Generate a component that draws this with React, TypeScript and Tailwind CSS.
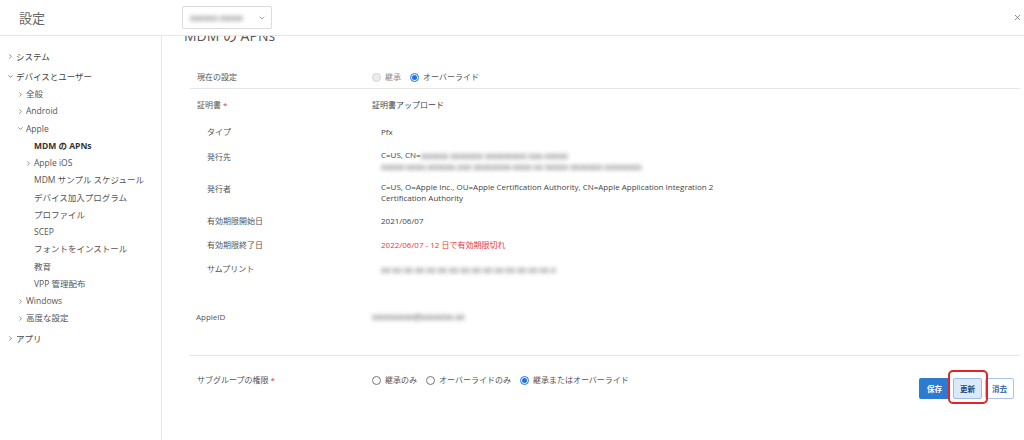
import { ChevronDown, ChevronRight, X } from "lucide-react";
import clsx from "clsx";

type NavItem = { label: string; level: 0 | 1 | 2; arrow?: "right" | "down"; bold?: boolean; gap?: boolean };

const nav: NavItem[] = [
  { label: "システム", level: 0, arrow: "right" },
  { label: "デバイスとユーザー", level: 0, arrow: "down", gap: true },
  { label: "全般", level: 1, arrow: "right" },
  { label: "Android", level: 1, arrow: "right" },
  { label: "Apple", level: 1, arrow: "down" },
  { label: "MDM の APNs", level: 2, bold: true },
  { label: "Apple iOS", level: 2, arrow: "right" },
  { label: "MDM サンプル スケジュール", level: 2 },
  { label: "デバイス加入プログラム", level: 2 },
  { label: "プロファイル", level: 2 },
  { label: "SCEP", level: 2 },
  { label: "フォントをインストール", level: 2 },
  { label: "教育", level: 2 },
  { label: "VPP 管理配布", level: 2 },
  { label: "Windows", level: 1, arrow: "right" },
  { label: "高度な設定", level: 1, arrow: "right" },
  { label: "アプリ", level: 0, arrow: "right", gap: true },
];

const Radio = ({ checked, disabled }: { checked?: boolean; disabled?: boolean }) => (
  <span
    className={clsx(
      "flex h-[9px] w-[9px] shrink-0 items-center justify-center rounded-full border",
      checked && "border-[#1a73e8] bg-white",
      disabled && "border-[#d4d4d4] bg-[#ececec]",
      !checked && !disabled && "border-[#777] bg-white"
    )}
  >
    {checked && <span className="h-[5px] w-[5px] rounded-full bg-[#1a73e8]" />}
  </span>
);

const Option = ({ label, checked, disabled }: { label: string; checked?: boolean; disabled?: boolean }) => (
  <span className="flex items-center gap-[4px]">
    <Radio checked={checked} disabled={disabled} />
    <span className={clsx(disabled ? "text-[#888]" : "text-[#555]")}>{label}</span>
  </span>
);

// masked values in the screenshot
const Blur = ({ w, text }: { w: string; text?: string }) => (
  <span className={clsx("inline-block overflow-hidden whitespace-nowrap align-middle font-bold text-[#888] blur-[2.2px]", w)}>
    {text ?? "xxxxx-xxxx.xxxxxx.xxx xxxxxxxx-xxxx xx xxxxx xxxxxxx xxxxxxxx"}
  </span>
);

const Row = ({ label, h, sub, children, lp = "" }: { label: React.ReactNode; h: string; sub?: boolean; children?: React.ReactNode; lp?: string }) => (
  <div className={clsx("flex items-start", h)}>
    <div className={clsx("w-[182px] shrink-0 text-[#555]", sub ? "pl-[17px]" : "pl-[7px]", lp)}>{label}</div>
    <div className={clsx("text-[#444]", sub && "pl-[9px]")}>{children}</div>
  </div>
);

export default function App() {
  return (
    <div className="flex h-[440px] w-[1024px] flex-col overflow-hidden bg-white font-['Open_Sans','Noto_Sans_CJK_JP',sans-serif] text-[8px] leading-[12px]">
      <header className="flex h-[36px] shrink-0 items-center border-b border-[#e6e6e6]">
        <div className="w-[182px] pl-[19px] text-[13px] text-[#666]">設定</div>
        <div className="flex h-[23px] w-[90px] items-center justify-between rounded-[2px] border border-[#dcdcdc] pl-[7px] pr-[5px]">
          <Blur w="w-[62px]" text="xxxxxx xxxxx" />
          <ChevronDown size={8} className="text-[#777]" />
        </div>
        <div className="flex-1" />
        <X size={9} strokeWidth={2} className="mr-[2px] text-[#666]" />
      </header>

      <div className="flex min-h-0 flex-1">
        <aside className="w-[162px] shrink-0 border-r border-[#e6e6e6] pt-[12px] text-[8.5px] text-[#555]">
          {nav.map((n) => (
            <div
              key={n.label}
              className={clsx(
                "flex h-[17.25px] items-center",
                n.gap && "mt-[3px]",
                n.level === 0 && "pl-[7px] text-[#444]",
                n.level === 1 && "pl-[17px]",
                n.level === 2 && "pl-[25px]"
              )}
            >
              <span className="flex w-[9px] shrink-0 items-center">
                {n.arrow === "right" && <ChevronRight size={7} strokeWidth={2.2} />}
                {n.arrow === "down" && <ChevronDown size={7} strokeWidth={2.2} />}
              </span>
              <span className={clsx(n.bold && "font-bold text-[#333]")}>{n.label}</span>
            </div>
          ))}
        </aside>

        <main className="min-w-0 flex-1 overflow-hidden">
          <div className="-mt-[10px] h-[21px] pl-[22px] text-[14px] leading-[20px] text-[#555]">MDM の APNs</div>
          <div className="ml-[28px] mr-[4px]">
            <div className="flex h-[42px] items-start border-b border-[#e6e6e6] pt-[24px]">
              <div className="w-[182px] shrink-0 pl-[7px] text-[#555]">現在の設定</div>
              <div className="flex h-[12px] items-center gap-[9px]">
                <Option label="継承" disabled />
                <Option label="オーバーライド" checked />
              </div>
            </div>

            <div className="pt-[10px]">
              <Row h="h-[27px]" label={<>証明書 <span className="text-[#e53935]">*</span></>}>
                証明書アップロード
              </Row>
              <Row h="h-[24px]" sub label="タイプ">Pfx</Row>
              <Row h="h-[31px]" sub label="発行先" lp="pt-[1px]">
                <div className="leading-[9.5px]">
                  <div className="whitespace-nowrap">
                    C=US, CN=<Blur w="w-[170px]" text="xxxxxx xxxxxxx xxxxxxxxx xxx.xxxxx" />
                  </div>
                  <Blur w="w-[340px]" />
                </div>
              </Row>
              <Row h="h-[34px]" sub label="発行者" lp="pt-[2px]">
                <div className="w-[345px] leading-[11px]">
                  C=US, O=Apple Inc., OU=Apple Certification Authority, CN=Apple Application Integration 2 Certification Authority
                </div>
              </Row>
              <Row h="h-[24px]" sub label="有効期限開始日">2021/06/07</Row>
              <Row h="h-[24px]" sub label="有効期限終了日">
                <span className="text-[#e53935]">2022/06/07 - 12 日で有効期限切れ</span>
              </Row>
              <Row h="h-[48px]" sub label="サムプリント">
                <Blur w="w-[175px]" text="xx xx xx xx xx xx xx xx xx xx xx xx xx xx xx xx xx xx" />
              </Row>
              <div className="flex h-[45px] items-start border-b border-[#e6e6e6]">
                <div className="w-[182px] shrink-0 pl-[6px] text-[#555]">AppleID</div>
                <Blur w="w-[98px]" text="xxxxxxxxx@xxxxxxx.xx" />
              </div>
            </div>

            <div className="flex items-start justify-between">
              <div className="flex items-start pt-[18px]">
                <div className="w-[182px] shrink-0 pl-[7px] text-[#555]">
                  サブグループの権限 <span className="text-[#e53935]">*</span>
                </div>
                <div className="flex h-[12px] items-center gap-[9px]">
                  <Option label="継承のみ" />
                  <Option label="オーバーライドのみ" />
                  <Option label="継承またはオーバーライド" checked />
                </div>
              </div>
              <div className="flex gap-[3px] pr-[6px] pt-[22px] text-[7.5px] font-bold">
                <button className="flex h-[21px] w-[31px] items-center justify-center rounded-[2px] bg-[#2b7bd0] text-white">
                  保存
                </button>
                <div className="relative">
                  <button className="flex h-[21px] w-[29px] items-center justify-center rounded-[2px] border border-[#9dbde3] bg-[#dceaf7] text-[#2a4d7a]">
                    更新
                  </button>
                  <span className="absolute -left-[5px] -top-[8px] h-[34px] w-[40px] rounded-[5px] border-2 border-[#e0242a]" />
                </div>
                <button className="flex h-[21px] w-[29px] items-center justify-center rounded-[2px] border border-[#a9c6e8] bg-white text-[#3a6fb0]">
                  消去
                </button>
              </div>
            </div>
          </div>
        </main>
      </div>
    </div>
  );
}
